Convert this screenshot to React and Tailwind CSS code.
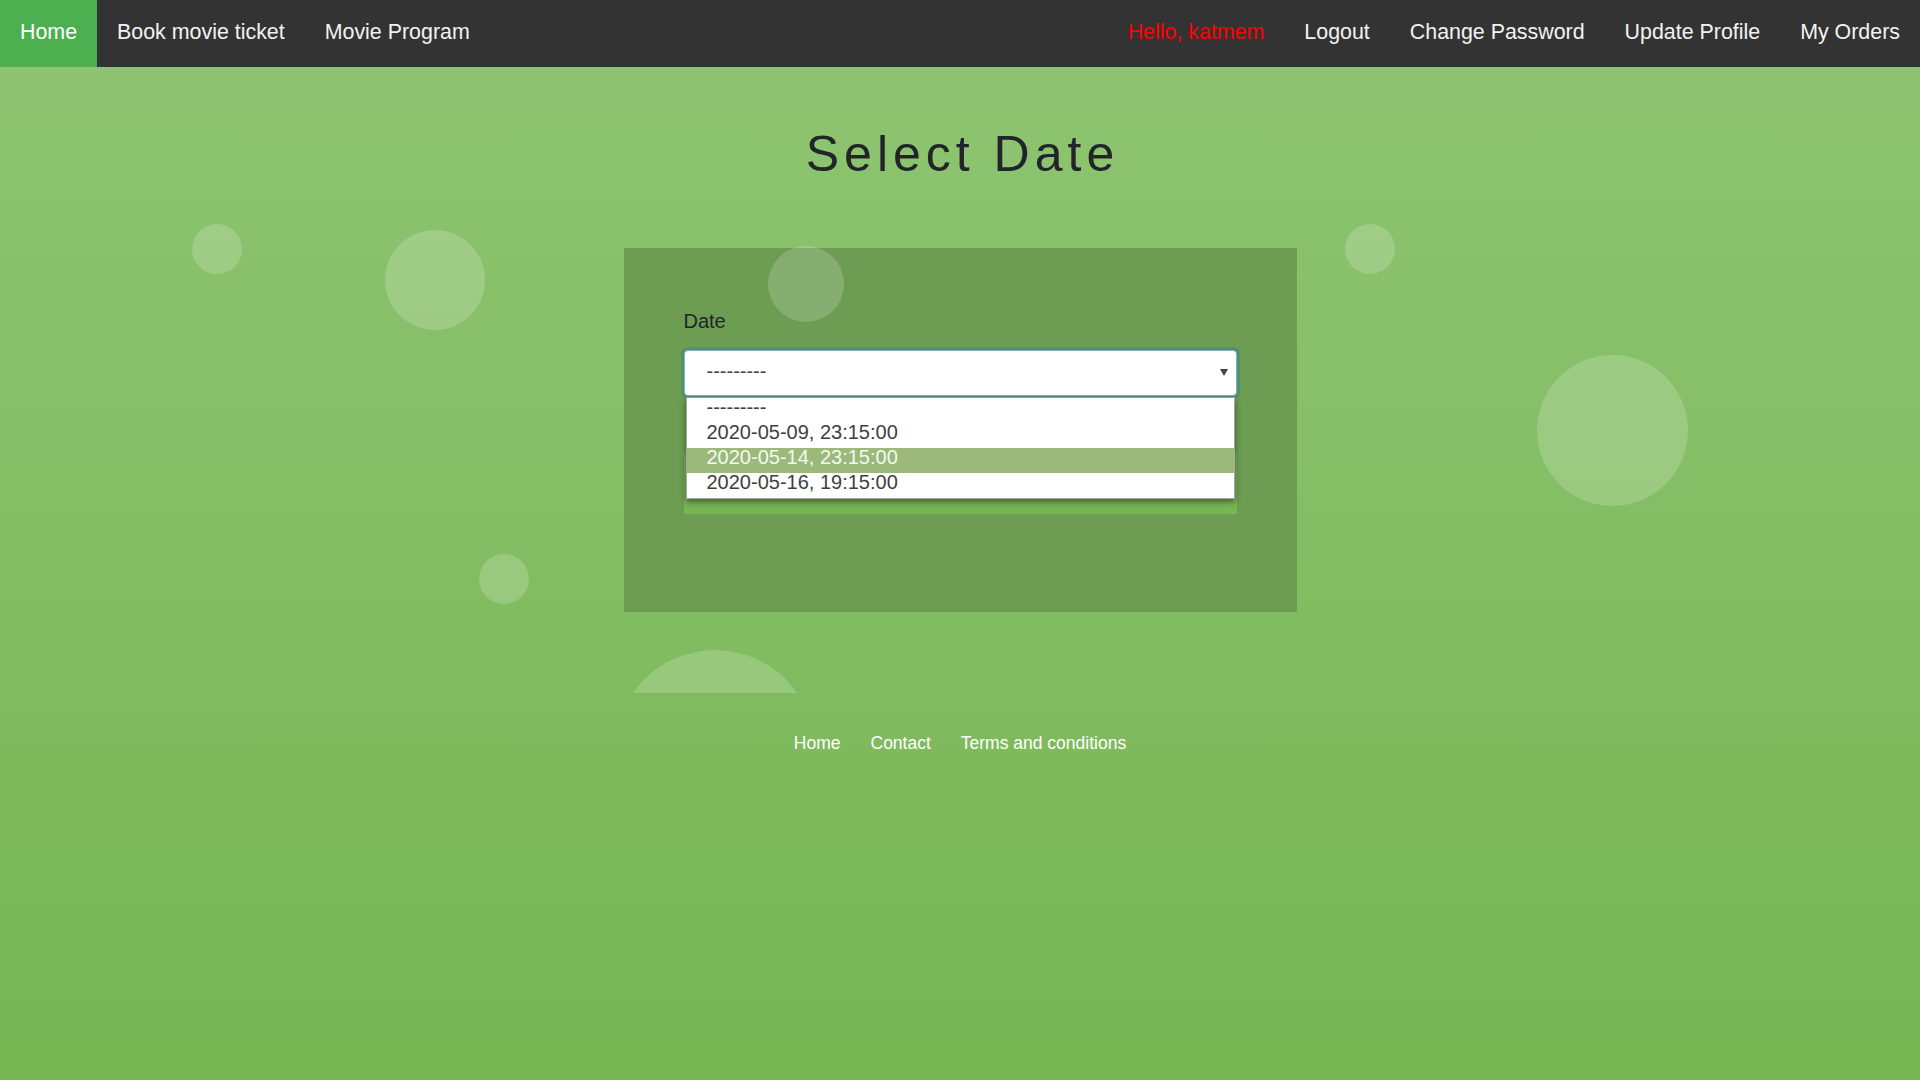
import React from 'react';

const leftLinks = [
  { label: 'Home', active: true },
  { label: 'Book movie ticket' },
  { label: 'Movie Program' },
];

const rightLinks = [
  { label: 'Hello, katmem', greeting: true },
  { label: 'Logout' },
  { label: 'Change Password' },
  { label: 'Update Profile' },
  { label: 'My Orders' },
];

const options = [
  { label: '---------' },
  { label: '2020-05-09, 23:15:00' },
  { label: '2020-05-14, 23:15:00', hover: true },
  { label: '2020-05-16, 19:15:00' },
];

// decorative bubbles, positions relative to the bubble area under the nav
const bubbles = [
  'left-[192px] top-[157px] w-[50px] h-[50px]',
  'left-[385px] top-[163px] w-[100px] h-[100px]',
  'left-[768px] top-[179px] w-[76px] h-[76px]',
  'left-[1345px] top-[157px] w-[50px] h-[50px]',
  'left-[1537px] top-[288px] w-[151px] h-[151px]',
  'left-[479px] top-[487px] w-[50px] h-[50px]',
  'left-[615px] top-[583px] w-[200px] h-[200px]',
];

function NavLink({ link }) {
  let color = 'text-[#f2f2f2]';
  if (link.greeting) color = 'text-[#ff0000]';
  if (link.active) color = 'text-white bg-[#4caf50]';
  return (
    <a href="#" className={`h-full px-[20px] pt-[20px] leading-[24px] ${color}`}>
      {link.label}
    </a>
  );
}

export default function App() {
  return (
    <div className="min-h-screen font-['Liberation_Sans',Arial,sans-serif]">
      <nav className="flex h-[67px] justify-between bg-[#333333] text-[21.4px]">
        <div className="flex">
          {leftLinks.map((link) => (
            <NavLink key={link.label} link={link} />
          ))}
        </div>
        <div className="flex">
          {rightLinks.map((link) => (
            <NavLink key={link.label} link={link} />
          ))}
        </div>
      </nav>

      <main className="h-[1013px] bg-linear-to-b from-[#8ec471] to-[#77b653]">
        <section className="relative h-[626px] overflow-hidden">
          <h1 className="pt-[57px] pl-[5px] text-center text-[50px] leading-[60px] tracking-[5px] text-[#212529]">
            Select Date
          </h1>

          <div className="mx-auto mt-[64px] h-[364px] w-[673px] bg-[#6c9d52] px-[60px] pt-[62px]">
            <label className="block text-[20px] leading-[23px] text-[#212529]">Date</label>

            <div className="relative mt-[17px]">
              <div className="flex h-[46px] items-center rounded-[4px] border border-[#7fb0c8] bg-white pb-[5px] pl-[22px] text-[20px] text-[#454545] shadow-[0_0_0_3px_rgba(20,120,170,0.3)]">
                ---------
                <svg className="absolute right-[9px] top-[19px]" width="8" height="7" viewBox="0 0 8 7">
                  <path d="M0 0h8L4 7z" fill="#444" />
                </svg>
              </div>

              <ul className="absolute left-[2px] right-[2px] top-[47px] z-10 border border-[#a6a6a6] border-t-[#9b9b9b] bg-white text-[20px] leading-[18px] text-[#3f3f3f] shadow-[0_3px_6px_rgba(0,0,0,0.45)]">
                {options.map((opt) => (
                  <li
                    key={opt.label}
                    className={`h-[25px] pl-[20px] ${opt.hover ? 'bg-[#9bb97b] text-[#f4f8ef]' : ''}`}
                  >
                    {opt.label}
                  </li>
                ))}
              </ul>
            </div>

            <button className="mt-[58px] h-[60px] w-full bg-[#77b553] text-[20px] text-white">
              Choose
            </button>
          </div>

          {bubbles.map((pos) => (
            <span key={pos} className={`absolute rounded-full bg-white/[0.18] ${pos}`} />
          ))}
        </section>

        <footer className="mt-[40px] flex justify-center gap-[30px] text-[17.5px] leading-[20px] text-white">
          <a href="#">Home</a>
          <a href="#">Contact</a>
          <a href="#">Terms and conditions</a>
        </footer>
      </main>
    </div>
  );
}
